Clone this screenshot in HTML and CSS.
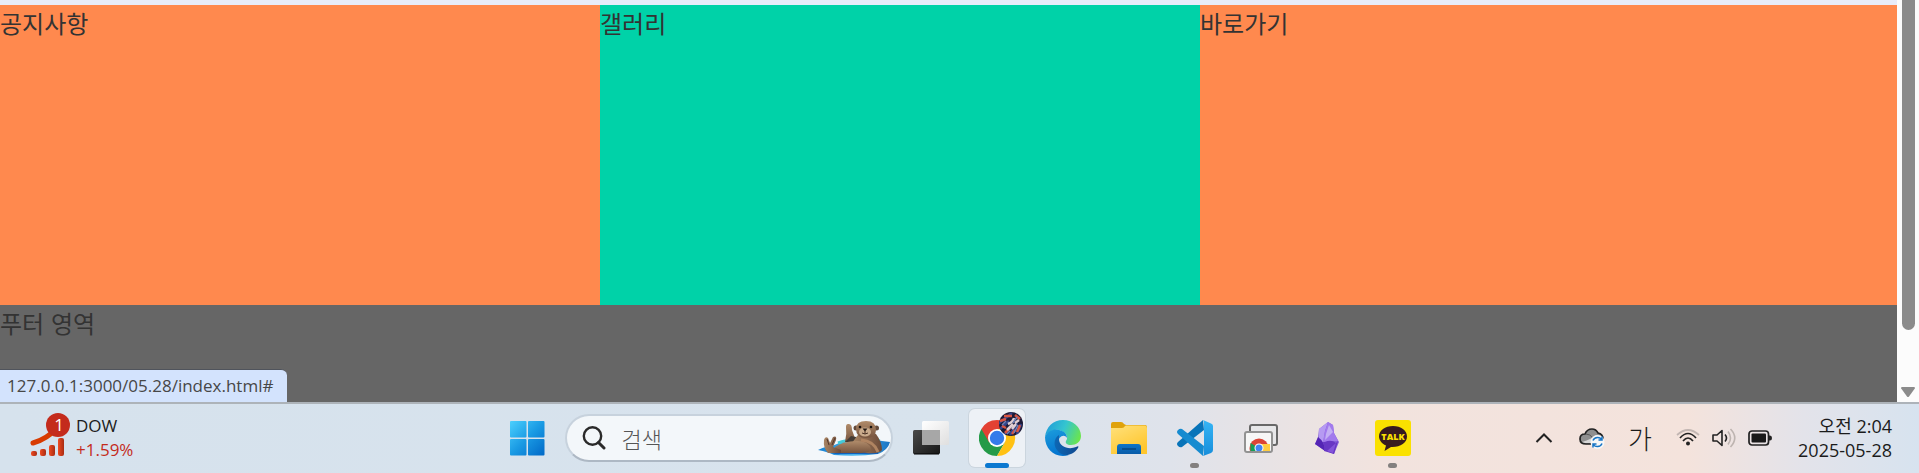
FILE: index.html
```html
<!DOCTYPE html>
<html lang="ko">
<head>
<meta charset="utf-8">
<title>index.html</title>
<link rel="stylesheet" href="styles.css">
</head>
<body>
<div class="browser">
  <main class="page">
    <div class="banner"></div>
    <div class="contents">
      <section class="notice"><h2>공지사항</h2></section>
      <section class="gallery"><h2>갤러리</h2></section>
      <section class="shortcut"><h2>바로가기</h2></section>
    </div>
    <footer class="footer">푸터 영역</footer>
  </main>
  <div class="scrollbar">
    <div class="thumb"></div>
    <svg class="arrow" width="16" height="12" viewBox="0 0 16 12"><path d="M2 1h12q1.500 0 .8 1.500L9 10.500q-1 1-2 0L1.200 2.500Q.5 1 2 1z" fill="#8b8b8b"/></svg>
  </div>
  <div class="status">127.0.0.1:3000/05.28/index.html#</div>
</div>

<div class="taskbar">
  <button class="widget" aria-label="DOW +1.59%">
    <svg width="40" height="50" viewBox="0 0 40 50">
      <defs><linearGradient id="bar" x1="0" x2="1"><stop offset="0" stop-color="#f04a20"/><stop offset="1" stop-color="#a82c13"/></linearGradient></defs>
      <path d="M3 30Q17 26 27 15" fill="none" stroke="#d83b01" stroke-width="5" stroke-linecap="round"/>
      <g fill="url(#bar)"><rect x="1" y="38" width="6" height="5" rx="2"/><rect x="10" y="36" width="6" height="7" rx="2"/><rect x="19" y="32" width="6" height="11" rx="2"/><rect x="28" y="25" width="6" height="18" rx="2"/></g>
      <circle cx="28" cy="12" r="12" fill="#c42b1c"/>
      <text class="badge" x="29" y="18" text-anchor="middle">1</text>
    </svg>
    <span class="quote"><span>DOW</span><span class="rise">+1.59%</span></span>
  </button>

  <div class="apps">
    <button class="app" aria-label="시작">
      <svg width="36" height="36" viewBox="0 0 36 36">
        <defs><linearGradient id="win" gradientUnits="userSpaceOnUse" x1="0" y1="0" x2="36" y2="36"><stop stop-color="#4fd3ff"/><stop offset=".5" stop-color="#1a9be4"/><stop offset="1" stop-color="#0067c6"/></linearGradient></defs>
        <g fill="url(#win)"><rect x="1" y="1" width="16.500" height="16.500" rx="1"/><rect x="19" y="1" width="16.500" height="16.500" rx="1"/><rect x="1" y="19" width="16.500" height="16.500" rx="1"/><rect x="19" y="19" width="16.500" height="16.500" rx="1"/></g>
      </svg>
    </button>
    <label class="search">
      <svg width="24" height="24" viewBox="0 0 24 24" fill="none" stroke="#2a2a2a"><circle cx="10.500" cy="10" r="8.700" stroke-width="2.400"/><path d="M16.500 16.500L22 22" stroke-width="3" stroke-linecap="round"/></svg>
      <input type="text" placeholder="검색" aria-label="검색">
      <svg width="72" height="38" viewBox="0 0 72 38">
        <defs>
          <linearGradient id="fur" x1="0" x2="0" y1="0" y2="1"><stop stop-color="#b08b6a"/><stop offset="1" stop-color="#76543e"/></linearGradient>
          <linearGradient id="fur2" x1="0" x2="1"><stop stop-color="#a98564"/><stop offset="1" stop-color="#6b4a38"/></linearGradient>
          <linearGradient id="sea" x1="0" x2="1"><stop stop-color="#1681d3"/><stop offset=".5" stop-color="#49b5ed"/><stop offset="1" stop-color="#1b75c4"/></linearGradient>
        </defs>
        <path d="M0 31Q8 27 14 27L26 22Q48 17 64 22L72 23Q70 31 60 35Q40 38 16 36Q10 33 0 31z" fill="url(#sea)"/>
        <path d="M20 24Q35 18 62 22" stroke="#43cbd9" stroke-width="3" fill="none"/>
        <path d="M8 30Q14 35 22 34L60 34" stroke="#125fb8" stroke-width="2" fill="none"/>
        <path d="M30 5Q34 4 34 11L38 22L27 23Q29 15 28 8Q28 5 30 5z" fill="url(#fur)"/>
        <path d="M33 17l5 1v5H27z" fill="#443c36"/>
        <path d="M39 17Q39 15 58 15Q64 23 64 31Q62 35 48 34L34 24z" fill="url(#fur2)"/>
        <path d="M17 28Q25 22 39 22Q51 22 53 30Q53 34 43 34L22 34Q17 32 17 28z" fill="url(#fur)"/>
        <path d="M10 34Q5 29 6 21Q7 17 10 19L12 24L15 18Q19 16 18 21L15 28L23 31V34z" fill="url(#fur2)"/>
        <path d="M9 20l2 6M17 19l-3 7" stroke="#55392c"/>
        <path d="M43 21Q56 22 60 33" stroke="#b08461" stroke-width="3" fill="none"/>
        <circle cx="38" cy="9" r="2.500" fill="#62493a"/><circle cx="58.500" cy="9" r="2.500" fill="#62493a"/>
        <path d="M38 10Q38 2 48 2Q58 2 58 11Q58 19 48 19Q38 19 38 10z" fill="url(#fur)"/>
        <ellipse cx="47" cy="13" rx="6" ry="4.500" fill="#c9ab8c"/>
        <circle cx="42" cy="8" r="1.300" fill="#17110f"/><circle cx="53" cy="8" r="1.300" fill="#17110f"/>
        <path d="M44.500 9.500h5L47 12.500z" fill="#231813"/><path d="M47 12v3M44 14q3 2 6 0" stroke="#4b3327" fill="none"/>
      </svg>
    </label>
    <button class="app" aria-label="작업 보기">
      <svg width="36" height="36" viewBox="0 0 36 36">
        <defs><linearGradient id="tv1" x2="1" y2="1"><stop stop-color="#4a4a4a"/><stop offset="1" stop-color="#171717"/></linearGradient><linearGradient id="tv2" x2="1" y2="1"><stop stop-color="#fff"/><stop offset="1" stop-color="#dfdfdf"/></linearGradient></defs>
        <rect x="0" y="10" width="27" height="24" rx="1.500" fill="url(#tv1)"/><path d="M1 34h25" stroke="#000"/>
        <rect x="9" y="1" width="27" height="24" rx="1.500" fill="url(#tv2)"/><path d="M9 10h18v15H10.500Q9 25 9 23.500z" fill="#a7a7a7"/>
      </svg>
    </button>
    <button class="app active" aria-label="Chrome">
      <svg width="44" height="44" viewBox="0 0 44 44">
        <path d="M18 26L2.400 17A18 18 0 0 0 18 44L25.800 30.500z" fill="#249a48"/>
        <path d="M18 26L25.800 30.500L18 44A18 18 0 0 0 33.600 17H18z" fill="#ffc114"/>
        <path d="M18 17H33.600A18 18 0 0 0 2.400 17L10.200 30.500z" fill="#e34133"/>
        <circle cx="18" cy="26" r="9" fill="#fff"/><circle cx="18" cy="26" r="7.200" fill="#347bea"/>
        <clipPath id="avatar"><circle cx="32" cy="12" r="12"/></clipPath>
        <g clip-path="url(#avatar)" fill="none"><path fill="#1d1a36" d="M20 0h24v24H20z"/>
          <path d="M19 12L33 1M21 17l9-8M25 23l8-10M31 23l7-12M38 22l4-10" stroke="#33458c" stroke-width="2.500"/>
          <path d="M25 4l8 0M21 9l6-2M36 3l5 4M26 21l5-5M38 20l3-7M23 14l4 2M33 22l3-4" stroke="#d95542" stroke-width="2.500"/>
          <path d="M29 12q5-2 6-6M28 18l6-6M36 11l4-3M33 17l4-5" stroke="#e0ced3" stroke-width="2.500"/>
          <path d="M23 13l4-4M35 21l4-8M38 5l-4 6M28 22l3-3" stroke="#6d80b7" stroke-width="1.500"/>
        </g>
      </svg>
    </button>
    <button class="app" aria-label="Edge">
      <svg width="36" height="36" viewBox="0 0 36 36">
        <defs>
          <linearGradient id="e1" x1="0" y1=".3" x2="1" y2=".6"><stop stop-color="#219ed9"/><stop offset=".5" stop-color="#35c5cf"/><stop offset="1" stop-color="#6be54d"/></linearGradient>
          <linearGradient id="e2" x2=".3" y2="1"><stop stop-color="#1c9ddc"/><stop offset="1" stop-color="#0474cf"/></linearGradient>
          <linearGradient id="e3"><stop stop-color="#0d68b5"/><stop offset="1" stop-color="#10478e"/></linearGradient>
        </defs>
        <path d="M0 17C1 7 8 0 18 0C28 0 36 7 36 16C36 22 31 25 26 25C22 25 20 23 21 21C24 17 21 12 14 10C8 9 3 12 0 17z" fill="url(#e1)"/>
        <path d="M0 17C3 9 12 8 17 11C20 12 22 15 22 18C19 13 13 17 13 23C13 30 18 35 24 35C11 39 0 30 0 17z" fill="url(#e2)"/>
        <path d="M14 15C9 18 8 25 12 30C17 38 28 36 33 28C34 26 33 26 31 27C24 30 14 27 14 19z" fill="url(#e3)"/>
      </svg>
    </button>
    <button class="app" aria-label="파일 탐색기">
      <svg width="36" height="36" viewBox="0 0 36 36">
        <defs><linearGradient id="fold" x2=".6" y2="1"><stop stop-color="#ffe17c"/><stop offset="1" stop-color="#ffc62d"/></linearGradient><linearGradient id="dock" x2="0" y2="1"><stop stop-color="#0e75c9"/><stop offset="1" stop-color="#095ca8"/></linearGradient></defs>
        <path d="M0 4Q0 2 2 2H10Q12 2 13 4L15 5H34Q36 5 36 7V12H0z" fill="#e0a20b"/>
        <path d="M0 8H11Q13 8 14 6L15 5.500H34Q36 5.500 36 8V34H0z" fill="url(#fold)"/>
        <path d="M6 34V27Q6 24 9 24H27Q30 24 30 27V34z" fill="url(#dock)"/><path d="M11 29h14" stroke="#064680" stroke-width="1.500"/>
      </svg>
    </button>
    <button class="app running" aria-label="Visual Studio Code">
      <svg width="36" height="36" viewBox="0 0 36 36">
        <defs><linearGradient id="vs" x2="0" y2="1"><stop stop-color="#36b5f5"/><stop offset="1" stop-color="#178edb"/></linearGradient></defs>
        <path d="M1 22L26 0L27 10L5 27Q3 28 1 26Q-1 24 1 22z" fill="#0874b9"/>
        <path d="M1 14Q-1 12 1 10Q3 8 5 9L27 26L26 36z" fill="#168bd0"/>
        <path d="M26 0L34 3.500Q36 4 36 6V30Q36 32 34 33L26 36Q27 35 27 33V3Q27 1 26 0z" fill="url(#vs)"/>
      </svg>
    </button>
    <button class="app" aria-label="Chrome 원격 데스크톱">
      <svg width="36" height="36" viewBox="0 0 36 36">
        <rect x="7" y="5" width="27" height="20" rx="2" fill="#e7e7e9" stroke="#686868" stroke-width="2"/>
        <rect x="2" y="12" width="27" height="20" rx="2" fill="#f7f7f7" stroke="#929292" stroke-width="2"/>
        <clipPath id="screen"><path d="M3 13h25v18H3z"/></clipPath>
        <g clip-path="url(#screen)"><circle cx="16" cy="28" r="9.500" fill="#db4437"/><path d="M16 28L7.500 23V34H16z" fill="#159d58"/><path d="M16 24H27V34H16z" fill="#ffcd40"/><circle cx="16" cy="28" r="4.500" fill="#fff"/><circle cx="16" cy="28" r="3.500" fill="#4285f4"/></g>
      </svg>
    </button>
    <button class="app" aria-label="Obsidian">
      <svg width="36" height="36" viewBox="0 0 36 36">
        <path d="M10 9L19 2L24 5L25 13L30 22L25 34L15 30L6 24L9 18z" fill="#8660d9"/>
        <path d="M10 9L19 2L16 11L14 23L10 21z" fill="#b69af2"/>
        <path d="M19 2L24 5L25 13L29 21L21 21L14 22L16 11z" fill="#a27aed"/><path d="M20 5L17 14L16 20L24 12z" fill="#c4aff4"/>
        <path d="M9 17Q16 22 16 31L6 24z" fill="#5425b5"/><path d="M16 22Q22 19 27 23L29 21L25 34L15 31Q16 26 14 22z" fill="#6837c4"/><path d="M27 23L24 33L18 31z" fill="#8455da"/>
      </svg>
    </button>
    <button class="app running" aria-label="KakaoTalk">
      <svg width="36" height="36" viewBox="0 0 36 36"><rect width="36" height="36" rx="3" fill="#fae100"/><path d="M18 6C10 6 4 10.500 4 16.500C4 20 6.500 23.500 11 25.500L9.500 31L16 27C25 27.500 32 23 32 16.500C32 10.500 26 6 18 6z" fill="#371b1f"/><text class="talk" x="18" y="20" text-anchor="middle">TALK</text></svg>
    </button>
  </div>

  <div class="tray">
    <button class="tray-item" aria-label="숨겨진 아이콘 표시"><svg width="18" height="12" viewBox="0 0 18 12"><path d="M1.500 10L9 2.500L16.500 10" fill="none" stroke="#222" stroke-width="2"/></svg></button>
    <button class="tray-item" aria-label="OneDrive">
      <svg width="26" height="22" viewBox="0 0 26 22"><path d="M7 17Q1 17 1 12Q1 7 6 7Q8 2 13 2Q17 2 19 6Q24 7 24 12Q24 17 19 17z" fill="#8f8f8f" stroke="#222" stroke-width="1.700"/><path d="M3 15Q13 12 17 8Q23 8 23 12L20 16H6z" fill="#d6d6d6"/><path d="M7 7q4 0 7 4" fill="none" stroke="#555"/><circle cx="18.500" cy="15" r="7" fill="#f7f7f7"/><path d="M14 13.500A5 5 0 0 1 23 13M23 16.500A5 5 0 0 1 14 17M23 9.500V13h-3.500M14 20.500V17h3.500" fill="none" stroke="#1674c5" stroke-width="1.500"/></svg>
    </button>
    <button class="tray-item ime">가</button>
    <button class="system" aria-label="네트워크, 볼륨, 배터리">
      <svg width="24" height="20" viewBox="0 0 24 20" fill="none" stroke="#222" stroke-width="1.700"><path d="M1 7Q12-3 23 7" stroke="#c2b6b2"/><path d="M4 10Q12 1 20 10M7 13Q12 7 17 13"/><circle cx="12" cy="15.500" r="2" fill="#222" stroke="none"/></svg>
      <svg width="24" height="20" viewBox="0 0 24 20" fill="none" stroke="#222" stroke-width="1.600"><path d="M1 7H5L10 2.500V17.500L5 13H1z" stroke-linejoin="round"/><path d="M13 6.500Q16 10 13 13.500"/><path d="M16 3.500Q21 10 16 16.500M18.500 1Q27 10 18.500 19" stroke="#bdb4b0"/></svg>
      <svg width="24" height="20" viewBox="0 0 24 20"><rect x="1" y="3" width="19.500" height="14" rx="3" fill="none" stroke="#222" stroke-width="1.700"/><rect x="3.500" y="5.500" width="14.500" height="9" rx="1" fill="#191919"/><path d="M21 7.500h1q2 0 2 2.500t-2 2.500h-1z" fill="#222"/></svg>
    </button>
    <button class="clock"><span>오전 2:04</span><span>2025-05-28</span></button>
  </div>
</div>
</body>
</html>
```
FILE: styles.css
```css
* { box-sizing: border-box; }
body {
  margin: 0;
  min-height: 100vh;
  display: flex;
  flex-direction: column;
  font-family: "Open Sans", "Noto Sans CJK KR", sans-serif;
  color: #333;
}
button {
  border: 0;
  padding: 0;
  background: none;
  font: inherit;
  color: #1b1b1b;
}
svg { display: block; flex: none; }

.browser { position: relative; flex: 1; display: flex; }
.page {
  flex: 1;
  display: flex;
  flex-direction: column;
  font: 24px/36px "Noto Sans CJK KR", sans-serif;
}
.banner { height: 5px; background: #e8ecf9; }
.contents { display: grid; grid-template-columns: 600px 600px 1fr; min-height: 300px; }
.contents h2 { margin: 0; font: inherit; }
.notice, .shortcut { background: #ff894e; }
.gallery { background: #00d2a8; }
.footer { flex: 1; background: #666; }

.scrollbar {
  width: 22px;
  display: flex;
  flex-direction: column;
  justify-content: space-between;
  align-items: center;
  padding-bottom: 4px;
  background: #fcfcfc;
}
.thumb { width: 13px; height: 83%; border-radius: 0 0 7px 7px; background: #8b8b8b; }
.status {
  position: absolute;
  left: 0;
  bottom: 0;
  padding: 0 14px 0 7px;
  border-top: 1px solid #50545c;
  border-radius: 0 6px 0 0;
  background: #d3e3fd;
  color: #474747;
  font-size: 17px;
  line-height: 32px;
}

.taskbar {
  display: grid;
  grid-template-columns: 1fr auto 1fr;
  align-items: center;
  height: 71px;
  padding-bottom: 2px;
  border-top: 2px solid #adb3b9;
  background: linear-gradient(90deg, #d6e2ed 0, #d8e3ed 50%, #dfe3eb 61%, #f2e3de 72%, #f4e3dc 88%, #e3e3ea 94%, #d7e3ef 100%);
}
.widget { display: flex; align-items: center; gap: 6px; padding-left: 30px; justify-self: start; }
.badge { fill: #fff; font-size: 17px; }
.quote { display: flex; flex-direction: column; font-size: 17px; line-height: 24px; text-align: left; }
.rise { color: #c42b1c; }

.apps { display: flex; align-items: center; }
.app {
  position: relative;
  width: 56px;
  height: 58px;
  margin: 0 5px;
  display: flex;
  align-items: center;
  justify-content: center;
  border-radius: 6px;
}
.active { background: #edf1f6; box-shadow: 0 0 0 1px #cbd5de; }
.active svg { margin: 0 0 8px 8px; }
.active::after, .running::after {
  content: "";
  position: absolute;
  bottom: -1px;
  width: 24px;
  height: 5px;
  border-radius: 3px;
  background: #0b78d0;
}
.running::after { width: 9px; background: #83807f; }
.search {
  display: flex;
  align-items: center;
  gap: 16px;
  width: 328px;
  height: 48px;
  margin: 0 5px;
  padding: 0 1px 0 15px;
  border: 2px solid #c7d2dd;
  border-bottom-color: #adb8c4;
  border-radius: 24px;
  background: #f3f7fa;
}
.search input {
  flex: 1;
  min-width: 0;
  padding: 0;
  border: 0;
  outline: 0;
  background: none;
  font: 300 22px/32px "Noto Sans CJK KR", sans-serif;
}
.search input::placeholder { color: #555; }
.talk { fill: #fae100; font: 800 9px "Open Sans", sans-serif; }

.tray { display: flex; align-items: center; justify-self: end; padding-right: 27px; }
.tray-item { width: 48px; height: 48px; display: flex; align-items: center; justify-content: center; }
.ime { font: 300 26px/36px "Noto Sans CJK KR", sans-serif; }
.system { display: flex; gap: 12px; margin: 0 26px 0 12px; }
.clock { display: flex; flex-direction: column; font-size: 18px; line-height: 24px; text-align: right; }
```
